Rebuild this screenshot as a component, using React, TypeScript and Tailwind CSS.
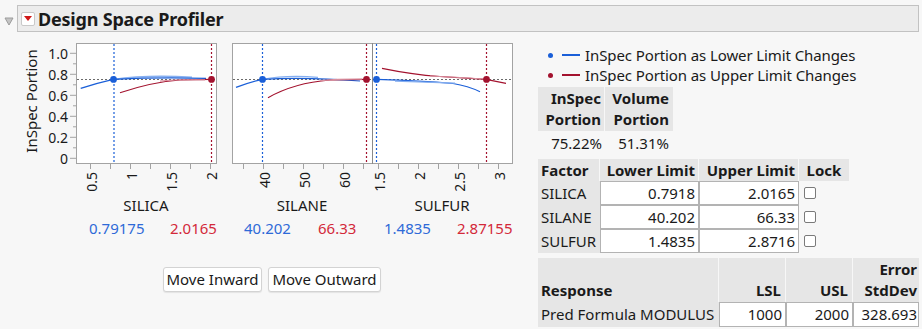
import React from 'react'

const BLUE = '#1a5fd8'
const RED = '#a3122e'
const AXIS = '#a3a3a3'

type Tick = { x: number; label?: string }

const silicaTicks: Tick[] = [
  { x: 90, label: '0.5' },
  { x: 110 },
  { x: 130, label: '1' },
  { x: 150 },
  { x: 170, label: '1.5' },
  { x: 190 },
  { x: 210, label: '2' },
]
const silaneTicks: Tick[] = [
  { x: 243 },
  { x: 263, label: '40' },
  { x: 283 },
  { x: 303, label: '50' },
  { x: 323 },
  { x: 343, label: '60' },
  { x: 363 },
]
const sulfurTicks: Tick[] = [
  { x: 378, label: '1.5' },
  { x: 398 },
  { x: 418, label: '2' },
  { x: 438 },
  { x: 458, label: '2.5' },
  { x: 478 },
  { x: 498, label: '3' },
]

const yMajor = [
  { y: 53.3, label: '1.0' },
  { y: 74.3, label: '0.8' },
  { y: 95.3, label: '0.6' },
  { y: 116.3, label: '0.4' },
  { y: 137.3, label: '0.2' },
  { y: 158.3, label: '0' },
]
const yMinor = [63.8, 84.8, 105.8, 126.8, 147.8]

const ProfilerChart = () => {
  const ticks = [...silicaTicks, ...silaneTicks, ...sulfurTicks]
  return (
    <svg width="520" height="180" viewBox="0 36 520 180" className="block">
      {/* y axis label */}
      <text
        x="31"
        y="101"
        transform="rotate(-90 31 101)"
        textAnchor="middle"
        dominantBaseline="central"
        fontSize="15"
        fill="#1a1a1a"
      >
        InSpec Portion
      </text>
      {yMajor.map((t) => (
        <g key={t.label}>
          <line x1="70" x2="76" y1={t.y} y2={t.y} stroke={AXIS} />
          <text x="68" y={t.y} textAnchor="end" dominantBaseline="central" fontSize="14" fill="#1a1a1a">
            {t.label}
          </text>
        </g>
      ))}
      {yMinor.map((y) => (
        <line key={y} x1="73" x2="76" y1={y} y2={y} stroke={AXIS} />
      ))}

      {/* frames */}
      <rect x="76.5" y="43.5" width="140" height="120" fill="white" stroke={AXIS} />
      <rect x="232.5" y="43.5" width="280" height="120" fill="white" stroke={AXIS} />
      <line x1="372.5" x2="372.5" y1="43" y2="164" stroke="#8a8a8a" />

      {/* x ticks */}
      {ticks.map((t) => (
        <g key={t.x}>
          <line x1={t.x + 0.5} x2={t.x + 0.5} y1="164" y2="169" stroke={AXIS} />
          {t.label && (
            <text
              x={t.x + 1}
              y="172"
              transform={`rotate(-90 ${t.x + 1} 172)`}
              textAnchor="end"
              dominantBaseline="central"
              fontSize="14"
              fill="#1a1a1a"
            >
              {t.label}
            </text>
          )}
        </g>
      ))}

      {/* target level */}
      <line x1="77" x2="216" y1="79.5" y2="79.5" stroke="#6a6a6a" strokeDasharray="2 2" />
      <line x1="233" x2="512" y1="79.5" y2="79.5" stroke="#6a6a6a" strokeDasharray="2 2" />

      {/* limit lines */}
      {[114, 262.5, 376.5].map((x) => (
        <line key={x} x1={x} x2={x} y1="44" y2="163" stroke={BLUE} strokeWidth="1.2" strokeDasharray="2 2" />
      ))}
      {[211.5, 366.5, 486.5].map((x) => (
        <line key={x} x1={x} x2={x} y1="44" y2="163" stroke={RED} strokeWidth="1.2" strokeDasharray="2 2" />
      ))}

      {/* SILICA curves */}
      <path d="M80.7 88.3 Q97 83 113.3 79.3" fill="none" stroke={BLUE} strokeWidth="1.3" />
      <path d="M113.3 79.3 C135 76.3 165 75.6 192 77.2" fill="none" stroke="#86aff0" strokeWidth="1.3" />
      <path d="M113.3 79.3 C140 78 180 77.6 206 78.4" fill="none" stroke={BLUE} strokeWidth="1.2" />
      <path d="M120 92.7 C140 86 160 81.5 180 80 L211 79.3" fill="none" stroke={RED} strokeWidth="1.2" />
      <path d="M160 81.2 C175 79.4 190 79.6 205 79.8" fill="none" stroke="#d98f9e" strokeWidth="1.2" />

      {/* SILANE curves */}
      <path d="M236 87.3 Q250 82 262.3 79.3" fill="none" stroke={BLUE} strokeWidth="1.3" />
      <path d="M262.3 79.3 C278 76.4 295 75.5 318 77.3" fill="none" stroke="#86aff0" strokeWidth="1.3" />
      <path d="M262.3 79.3 C290 77.6 330 78.6 360 81" fill="none" stroke={BLUE} strokeWidth="1.2" />
      <path d="M268 97.7 C285 88 305 82 330 80 L366 79.3" fill="none" stroke={RED} strokeWidth="1.2" />
      <path d="M320 80.6 C335 79.3 350 79 362 79.2" fill="none" stroke="#d98f9e" strokeWidth="1.2" />

      {/* SULFUR curves */}
      <path d="M376.3 79.3 C400 80 430 81.4 453 83.5 Q468 86 480 91.7" fill="none" stroke={BLUE} strokeWidth="1.2" />
      <path d="M395 81.2 C420 82.2 440 82.6 455 83.2" fill="none" stroke="#86aff0" strokeWidth="1.3" />
      <path d="M382 68.3 C400 72 420 75 440 76.5 L486 79.3 L506 83.3" fill="none" stroke={RED} strokeWidth="1.2" />
      <path d="M430 76 C450 77 470 78 484 79" fill="none" stroke="#d98f9e" strokeWidth="1.2" />

      {/* dots */}
      {[113.5, 262.5, 376.5].map((x) => (
        <circle key={x} cx={x} cy="79.4" r="3.4" fill={BLUE} />
      ))}
      {[211.5, 366.5, 486.5].map((x) => (
        <circle key={x} cx={x} cy="79.4" r="3.4" fill={RED} />
      ))}

      {/* axis labels */}
      <text x="146" y="205" textAnchor="middle" dominantBaseline="central" fontSize="15" fill="#1a1a1a">
        SILICA
      </text>
      <text x="302" y="205" textAnchor="middle" dominantBaseline="central" fontSize="15" fill="#1a1a1a">
        SILANE
      </text>
      <text x="442" y="205" textAnchor="middle" dominantBaseline="central" fontSize="15" fill="#1a1a1a">
        SULFUR
      </text>
    </svg>
  )
}

const Checkbox = () => (
  <span className="block w-[12px] h-[12px] rounded-[2px] border border-[#7a7a7a] bg-white" />
)

const factorRows = [
  { name: 'SILICA', lower: '0.7918', upper: '2.0165' },
  { name: 'SILANE', lower: '40.202', upper: '66.33' },
  { name: 'SULFUR', lower: '1.4835', upper: '2.8716' },
]

const App = () => {
  return (
    <div
      className="w-[922px] h-[329px] overflow-hidden bg-[#f7f7f7] text-[#1a1a1a]"
      style={{ fontFamily: '"Noto Sans", "Open Sans", sans-serif' }}
    >
      {/* Title bar */}
      <div className="flex items-start pt-[5px]">
        <svg width="17" height="27" viewBox="0 0 17 27" className="block">
          <polygon points="5,13 13,13 9,20" fill="#c4c4c4" stroke="#9c9c9c" strokeWidth="1" strokeLinejoin="round" />
        </svg>
        <div className="flex items-center w-[902px] h-[27px] bg-[#ececec] border border-[#c2c2c2]">
          <span className="ml-[3px] flex items-center justify-center w-[14px] h-[14px] rounded-[2px] bg-white border border-[#c9c9c9]">
            <svg width="8" height="5" viewBox="0 0 8 5">
              <polygon points="0,0 8,0 4,5" fill="#d01818" />
            </svg>
          </span>
          <span className="ml-[3px] text-[18px] font-bold leading-none tracking-[-0.2px]">Design Space Profiler</span>
        </div>
      </div>

      <div className="flex mt-[4px]">
        {/* Left: profiler plots */}
        <div className="w-[520px] flex flex-col">
          <ProfilerChart />
          <div className="flex h-[20px] items-center mt-[2px] pl-[89px] text-[15px]">
            <span className="w-[81px] text-[#2e6ad8]">0.79175</span>
            <span className="w-[74px] text-[#d3293a]">2.0165</span>
            <span className="w-[74px] text-[#2e6ad8]">40.202</span>
            <span className="w-[66px] text-[#d3293a]">66.33</span>
            <span className="w-[73px] text-[#2e6ad8]">1.4835</span>
            <span className="text-[#d3293a]">2.87155</span>
          </div>
          <div className="flex gap-[6px] mt-[29px] pl-[163px]">
            <button className="h-[25px] w-[99px] rounded-[3px] bg-white border border-[#d3d3d3] shadow-[0_1px_1px_rgba(0,0,0,0.08)] text-[15px] leading-none">
              Move Inward
            </button>
            <button className="h-[25px] w-[113px] rounded-[3px] bg-white border border-[#d3d3d3] shadow-[0_1px_1px_rgba(0,0,0,0.08)] text-[15px] leading-none">
              Move Outward
            </button>
          </div>
        </div>

        {/* Right: legend and tables */}
        <div className="flex flex-col pt-[9px] pl-[18px] text-[15px]">
          <div className="flex items-center h-[20px]">
            <span className="ml-[10px] w-[5px] h-[5px] rounded-full bg-[#1a5fd8]" />
            <span className="ml-[9px] w-[18px] h-[2px] bg-[#1a5fd8]" />
            <span className="ml-[5px] whitespace-nowrap tracking-[-0.1px]">InSpec Portion as Lower Limit Changes</span>
          </div>
          <div className="flex items-center h-[20px]">
            <span className="ml-[10px] w-[5px] h-[5px] rounded-full bg-[#a3122e]" />
            <span className="ml-[9px] w-[18px] h-[2px] bg-[#a3122e]" />
            <span className="ml-[5px] whitespace-nowrap tracking-[-0.1px]">InSpec Portion as Upper Limit Changes</span>
          </div>

          {/* InSpec / Volume */}
          <div className="flex mt-[2px] font-bold leading-[21px]">
            <div className="w-[67px] h-[44px] bg-[#e6e6e6] border-r border-[#f7f7f7] text-right pr-[3px] pt-px">
              InSpec
              <br />
              Portion
            </div>
            <div className="w-[68px] h-[44px] bg-[#e6e6e6] text-right pr-[4px] pt-px">
              Volume
              <br />
              Portion
            </div>
          </div>
          <div className="flex h-[24px] items-center">
            <span className="w-[67px] text-right pr-[3px]">75.22%</span>
            <span className="w-[68px] text-right pr-[4px]">51.31%</span>
          </div>

          {/* Factor limits */}
          <div className="mt-[4px] flex h-[22px] items-center bg-[#e6e6e6] w-[311px] font-bold">
            <span className="w-[62px] h-full flex items-center pl-[3px] border-r border-[#f7f7f7]">Factor</span>
            <span className="w-[99px] h-full flex items-center justify-end pr-[3px] border-r border-[#f7f7f7]">Lower Limit</span>
            <span className="w-[100px] h-full flex items-center justify-end pr-[3px] border-r border-[#f7f7f7]">Upper Limit</span>
            <span className="w-[50px] h-full flex items-center justify-center">Lock</span>
          </div>
          {factorRows.map((r) => (
            <div key={r.name} className="flex h-[24px]">
              <span className="w-[62px] h-full flex items-center pl-[3px] bg-[#e6e6e6]">{r.name}</span>
              <span className="w-[99px] h-full flex items-center justify-end pr-[3px] bg-white border border-[#b3b3b3]">
                {r.lower}
              </span>
              <span className="w-[100px] h-full flex items-center justify-end pr-[3px] bg-white border border-[#b3b3b3]">
                {r.upper}
              </span>
              <span className="w-[50px] h-full flex items-center pl-[5px]">
                <Checkbox />
              </span>
            </div>
          ))}

          {/* Response */}
          <div className="mt-[5px] flex h-[44px] bg-[#e6e6e6] w-[381px] font-bold leading-[21px]">
            <span className="w-[181px] h-full flex items-end pl-[3px] pb-px border-r border-[#f7f7f7]">Response</span>
            <span className="w-[67px] h-full flex items-end justify-end pr-[4px] pb-px border-r border-[#f7f7f7]">LSL</span>
            <span className="w-[67px] h-full flex items-end justify-end pr-[4px] pb-px border-r border-[#f7f7f7]">USL</span>
            <span className="w-[66px] h-full flex flex-col items-end justify-end pr-[2px] pb-px">
              <span>Error</span>
              <span>StdDev</span>
            </span>
          </div>
          <div className="flex h-[25px]">
            <span className="w-[181px] h-full flex items-center pl-[3px] bg-[#e6e6e6] whitespace-nowrap">Pred Formula MODULUS</span>
            <span className="w-[67px] h-full flex items-center justify-end pr-[3px] bg-white border border-[#b3b3b3]">1000</span>
            <span className="w-[67px] h-full flex items-center justify-end pr-[3px] bg-white border border-[#b3b3b3]">2000</span>
            <span className="w-[66px] h-full flex items-center justify-end pr-[1px] bg-white border border-[#b3b3b3]">328.693</span>
          </div>
        </div>
      </div>
    </div>
  )
}

export default App
